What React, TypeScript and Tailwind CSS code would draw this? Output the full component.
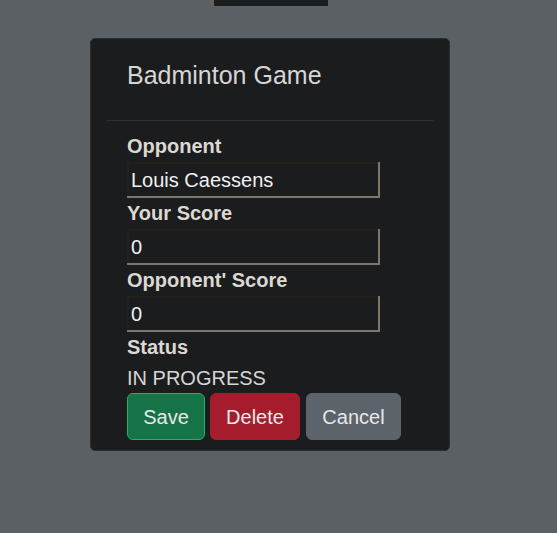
import React from "react";

const font = { fontFamily: '"Liberation Sans", Arial, sans-serif' };

function Field({ label, value }: { label: string; value: string }) {
  return (
    <div className="flex flex-col">
      <label className="text-[20px] font-bold leading-[31px] text-[#dcd8d2]">{label}</label>
      <div className="flex h-[36px] w-[253px] items-center bg-[#1b1c1e] pl-[4px] text-[20px] text-[#f0f0f0] shadow-[inset_-2px_-2px_0_#7d766b,inset_2px_2px_0_#231f1b]">
        {value}
      </div>
    </div>
  );
}

export default function App() {
  return (
    <div className="min-h-[533px] w-full bg-[#5a6063]" style={font}>
      <div className="ml-[212px] h-[6px] w-[116px] border-l-2 border-[#6b6150] bg-[#1b1c1e]" />
      <div className="ml-[90px] mt-[32px] w-[360px] rounded-[5px] border border-[#2c2d30] bg-[#1b1c1e] px-[16px] pb-[10px]">
        <div className="border-b border-[#2e3033] px-[20px] pt-[21px] pb-[30px]">
          <h5 className="text-[25px] leading-[30px] text-[#d6d6d6]">Badminton Game</h5>
        </div>
        <div className="px-[20px] pt-[10px]">
          <Field label="Opponent" value="Louis Caessens" />
          <Field label="Your Score" value="0" />
          <Field label="Opponent' Score" value="0" />
          <div className="text-[20px] font-bold leading-[31px] text-[#dcd8d2]">Status</div>
          <div className="text-[20px] leading-[30px] text-[#d6d6d6]">IN PROGRESS</div>
          <div className="flex gap-[5px]">
            <button className="h-[47px] w-[78px] rounded-[6px] border border-[#20b26b] bg-[#167347] text-[20px] text-[#e8e8e8]">
              Save
            </button>
            <button className="h-[47px] w-[90px] rounded-[6px] border border-[#a51d2d] bg-[#a51d2d] text-[20px] text-[#e8e8e8]">
              Delete
            </button>
            <button className="ml-px h-[47px] w-[95px] rounded-[6px] border border-[#5c636a] bg-[#5c636a] text-[20px] text-[#e8e8e8]">
              Cancel
            </button>
          </div>
        </div>
      </div>
    </div>
  );
}
